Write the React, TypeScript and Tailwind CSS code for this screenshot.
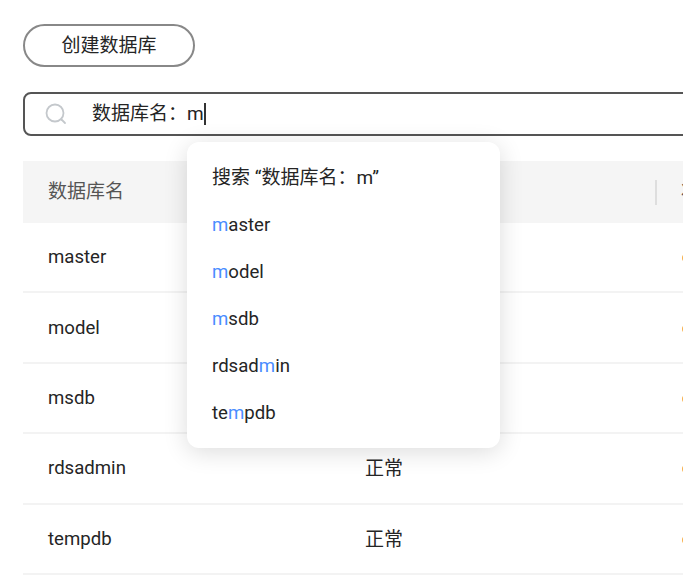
const font = "font-['Roboto','Noto_Sans_CJK_SC',sans-serif]"

const rows = [
  { name: "master", status: "正常" },
  { name: "model", status: "正常" },
  { name: "msdb", status: "正常" },
  { name: "rdsadmin", status: "正常" },
  { name: "tempdb", status: "正常" },
]

const options = [
  ["", "m", "aster"],
  ["", "m", "odel"],
  ["", "m", "sdb"],
  ["rdsad", "m", "in"],
  ["te", "m", "pdb"],
]

export default function App() {
  return (
    <div className={`relative w-[683px] h-[575px] overflow-hidden bg-white pl-[23px] pt-[24px] text-[#252525] ${font}`}>
      {/* Create button */}
      <button className="flex items-center justify-center w-[172px] h-[43px] pt-px rounded-full border-2 border-[#888] text-[19px] text-[#252525]">
        创建数据库
      </button>

      {/* Search box */}
      <div className="flex items-center w-[720px] h-[44px] mt-[25px] pl-[19px] rounded-[8px] border-2 border-[#555]">
        <svg width="24" height="24" viewBox="0 0 24 24" fill="none" stroke="#c4c8cc" strokeWidth="1.8" strokeLinecap="round">
          <circle cx="11" cy="11" r="8.5" />
          <path d="M17.5 17.5L21 21" />
        </svg>
        <span className="ml-[24px] text-[19px] leading-[26px]">数据库名：m</span>
        <span className="w-[2px] h-[22px] bg-[#333]" />
      </div>

      {/* Table */}
      <div className="w-[720px] mt-[25px]">
        <div className="relative flex items-center h-[62px] bg-[#f5f5f5] pl-[25px] text-[19px] text-[#555]">
          <span className="w-[317px]">数据库名</span>
          <span className="absolute left-[632px] top-[19px] w-[2px] h-[25px] bg-[#dedede]" />
          <span className="absolute left-[658px]">状态</span>
        </div>
        {rows.map((row) => (
          <div key={row.name} className="relative flex items-center h-[70.4px] pl-[25px] pt-[2px] border-b-2 border-[#f3f3f3] text-[18.6px]">
            <span className="w-[317px]">{row.name}</span>
            <span className="text-[19px]">{row.status}</span>
            <span className="absolute left-[659px] w-[8px] h-[8px] rounded-full bg-[#f8b04a]" />
          </div>
        ))}
      </div>

      {/* Suggestion dropdown */}
      <div className="absolute left-[187px] top-[142px] w-[313px] h-[306px] rounded-[12px] bg-white pt-[13px] pl-[25px] shadow-[0_4px_24px_rgba(0,0,0,0.14)]">
        <div className="h-[47px] flex items-center text-[19px]">搜索 “数据库名：m”</div>
        {options.map(([before, match, after]) => (
          <div key={before + after} className="h-[47px] flex items-center text-[18.6px]">
            <span>
              {before}
              <span className="text-[#4a8cff]">{match}</span>
              {after}
            </span>
          </div>
        ))}
      </div>
    </div>
  )
}
